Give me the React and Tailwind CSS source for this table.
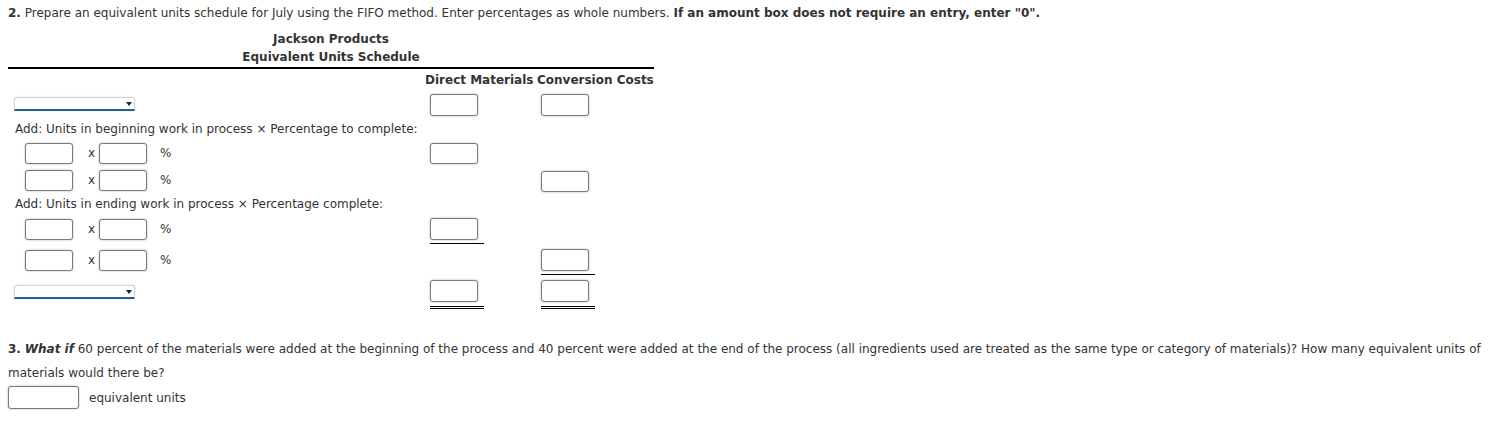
import React from 'react'

const font = { fontFamily: '"DejaVu Sans", Verdana, sans-serif' }

function Box({ w = 'w-[48px]', h = 'h-[22px]' }) {
  return (
    <div
      className={`${w} ${h} bg-white border border-[#7b7b7b] rounded-[3px] shadow-[0_0_2px_rgba(0,0,0,0.35)]`}
    />
  )
}

function Dropdown() {
  return (
    <div className="relative w-[121px] h-[14px] bg-white border border-[#d4d4d4] border-b-2 border-b-[#20618d] rounded-t-[3px] shadow-[0_0_2px_rgba(0,0,0,0.15)]">
      <div className="absolute right-[2px] top-[4px] w-0 h-0 border-l-[3px] border-r-[3px] border-t-[4px] border-l-transparent border-r-transparent border-t-[#222]" />
    </div>
  )
}

function Mult() {
  return (
    <div className="flex items-start pl-[17px]">
      <Box h="h-[21px]" />
      <span className="w-[26px] pl-[15px] leading-[21px]">x</span>
      <Box h="h-[21px]" />
      <span className="pl-[13px] leading-[21px]">%</span>
    </div>
  )
}

function Row({ h, label, dm, cc, mt = 'mt-[3px]' }) {
  return (
    <div className={`grid grid-cols-[416px_110px_120px] ${h}`}>
      <div className={mt}>{label}</div>
      <div className="pl-[6px] mt-[3px]">{dm}</div>
      <div className="pl-[7px] mt-[3px]">{cc}</div>
    </div>
  )
}

function Under({ double, children }) {
  return (
    <div
      className={
        double
          ? 'w-[54px] pb-[4px] border-b-[3px] border-double border-black'
          : 'w-[54px] pb-[3px] border-b border-black'
      }
    >
      {children}
    </div>
  )
}

export default function App() {
  return (
    <div className="bg-white w-[1489px] h-[430px] text-[#333] text-[12px]" style={font}>
      <div className="pl-[8px] pt-[6px]">
        <p className="leading-[14px]">
          <b>2.</b> Prepare an equivalent units schedule for July using the FIFO method. Enter percentages as whole
          numbers. <b>If an amount box does not require an entry, enter "0".</b>
        </p>

        <div className="w-[646px] mt-[10px]">
          <div className="text-center font-bold leading-[18px] pb-px border-b-2 border-black">
            <div>Jackson Products</div>
            <div>Equivalent Units Schedule</div>
          </div>

          <div className="grid grid-cols-[416px_110px_120px] h-[22px] pt-[4px] font-bold leading-[14px]">
            <div />
            <div className="pl-[1px] whitespace-nowrap">Direct Materials</div>
            <div className="pl-[3px] whitespace-nowrap">Conversion Costs</div>
          </div>

          <Row
            h="h-[31px]"
            mt="mt-[6px] pl-[6px]"
            label={<Dropdown />}
            dm={<Box />}
            cc={<Box />}
          />

          <div className="h-[14px] leading-[14px] pl-[7px] whitespace-nowrap">
            Add: Units in beginning work in process × Percentage to complete:
          </div>

          <Row h="h-[31px]" mt="mt-[7px]" label={<Mult />} dm={<div className="mt-[4px]"><Box h="h-[21px]" /></div>} cc={null} />
          <Row h="h-[30px]" mt="mt-[3px]" label={<Mult />} dm={null} cc={<div className="mt-px"><Box h="h-[21px]" /></div>} />

          <div className="h-[14px] leading-[14px] pl-[7px] whitespace-nowrap">
            Add: Units in ending work in process × Percentage complete:
          </div>

          <Row
            h="h-[35px]"
            mt="mt-[8px]"
            label={<Mult />}
            dm={<div className="mt-[4px]"><Under><Box /></Under></div>}
            cc={null}
          />
          <Row
            h="h-[31px]"
            mt="mt-[4px]"
            label={<Mult />}
            dm={null}
            cc={<Under><Box /></Under>}
          />
          <Row
            h="h-[33px]"
            mt="mt-[8px] pl-[6px]"
            label={<Dropdown />}
            dm={<Under double><Box /></Under>}
            cc={<Under double><Box /></Under>}
          />
        </div>

        <div className="mt-[27px] leading-[24px]">
          <b>3.</b> <b className="italic">What if</b> 60 percent of the materials were added at the beginning of the
          process and 40 percent were added at the end of the process (all ingredients used are treated as the same
          type or category of materials)? How many equivalent units of materials would there be?
        </div>
        <div className="flex items-center mt-px">
          <Box w="w-[71px]" h="h-[23px]" />
          <span className="pl-[10px]">equivalent units</span>
        </div>
      </div>
    </div>
  )
}
